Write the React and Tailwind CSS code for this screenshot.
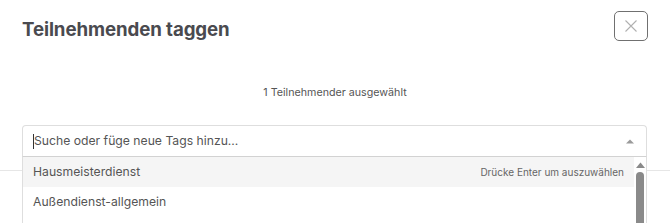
import React from "react";

export default function App() {
  return (
    <div className="relative w-[670px] h-[223px] overflow-hidden bg-white font-['Inter',_'Liberation_Sans',_sans-serif]">
      <div className="flex items-start justify-between pl-[22px] pr-[22px]">
        <h1 className="mt-[16px] text-[18.7px] leading-[27px] font-bold text-[#4a4a4f] tracking-[-0.1px]">
          Teilnehmenden taggen
        </h1>
        <button className="mt-[11px] flex h-[30px] w-[34px] items-center justify-center rounded-[5px] border border-[#707070] bg-white">
          <svg width="14" height="14" viewBox="0 0 14 14" fill="none">
            <path d="M1.5 1.5 L12.5 12.5 M12.5 1.5 L1.5 12.5" stroke="#b0b0b0" strokeWidth="1.1" />
          </svg>
        </button>
      </div>
      <div className="mt-[43px] text-center text-[10.7px] leading-[14px] text-[#555]">
        1 Teilnehmender ausgewählt
      </div>
      <div className="relative mx-[22px] mt-[25px] mr-[23px]">
        <div className="flex h-[32px] items-center rounded-t-[4px] border border-[#dedede] border-b-[#d2d2d2] pl-[10px] pr-[12px]">
          <span className="h-[15px] w-px bg-[#333]" />
          <span className="flex-1 text-[12.2px] text-[#555]">Suche oder füge neue Tags hinzu...</span>
          <svg width="8" height="5" viewBox="0 0 8 5" className="mt-[1px]">
            <path d="M0 4.5 L4 0.5 L8 4.5 Z" fill="#9a9a9a" />
          </svg>
        </div>
        <div className="absolute left-0 right-0 top-full z-10 flex h-[70px] border-x border-[#dedede] bg-white">
          <div className="flex-1">
            <div className="flex h-[30px] items-center justify-between bg-[#f5f5f5] pl-[10px] pr-[10px]">
              <span className="text-[12.2px] text-[#555]">Hausmeisterdienst</span>
              <span className="text-[10px] text-[#666]">Drücke Enter um auszuwählen</span>
            </div>
            <div className="flex h-[30px] items-center pl-[10px]">
              <span className="text-[12.2px] text-[#555]">Außendienst-allgemein</span>
            </div>
          </div>
          <div className="flex w-[12px] flex-col items-center pt-[5px]">
            <svg width="9" height="6" viewBox="0 0 9 6">
              <path d="M0 6 L4.5 0.5 L9 6 Z" fill="#8a8a8a" />
            </svg>
            <div className="mt-[4px] w-[8px] flex-1 rounded-t-[4px] bg-[#8a8a8a]" />
          </div>
        </div>
      </div>
      <div className="mt-[13px] border-t border-[#e6e6e6]" />
    </div>
  );
}
